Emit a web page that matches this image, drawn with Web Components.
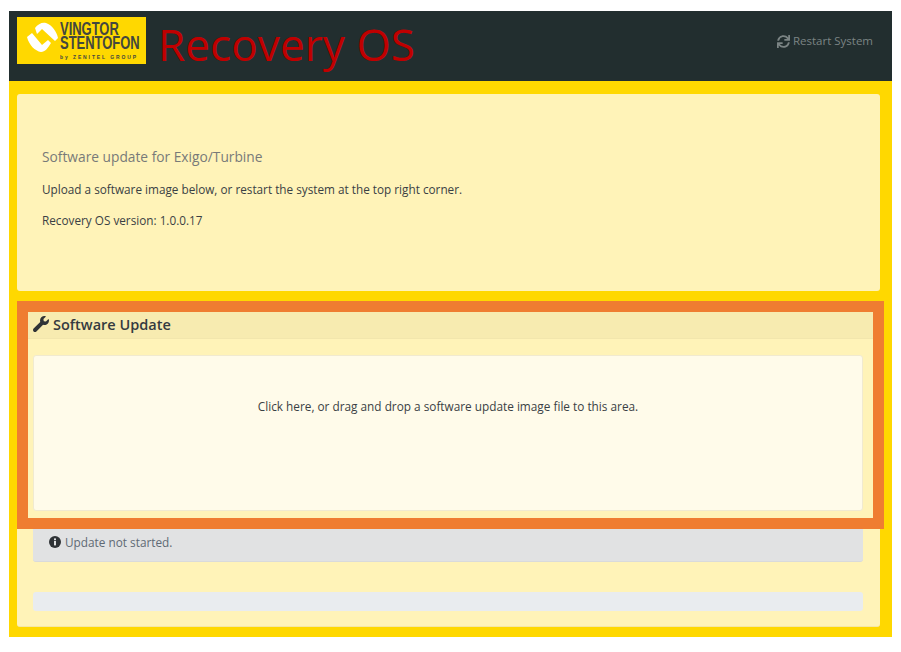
<!DOCTYPE html>
<html lang="en">
<head>
<meta charset="utf-8">
<title>Recovery OS</title>
<style>
    html, body {
        margin: 0;
        background: #fff;
        overflow: hidden;
    }
    body {
        padding: 11px 9px 15px 9px;
        font-family: "Open Sans", "Noto Sans", sans-serif;
        color: #3a3f44;
    }
</style>
</head>
<body>
<recovery-page>
    <recovery-header slot="header"></recovery-header>
    <intro-panel>
        <span slot="title">Software update for Exigo/Turbine</span>
        <span slot="lead">Upload a software image below, or restart the system at the top right corner.</span>
        <span slot="version">Recovery OS version: 1.0.0.17</span>
    </intro-panel>
    <update-card>
        <span slot="title">Software Update</span>
        <drop-zone>Click here, or drag and drop a software update image file to this area.</drop-zone>
        <status-alert>Update not started.</status-alert>
        <progress-bar></progress-bar>
    </update-card>
</recovery-page>

<script>
// each element just owns its own shadow markup
function define(name, html) {
    customElements.define(name, class extends HTMLElement {
        constructor() {
            super();
            this.attachShadow({mode: "open"}).innerHTML = html;
        }
    });
}

define("recovery-page", /* html */ `
<style>
    :host {
        display: block;
        width: 883px;
        height: 626px;
        background: #ffd800;
    }
    main {
        display: flex;
        flex-direction: column;
        gap: 10px;
        padding: 13px 12px 10px 8px;
    }
</style>
<slot name="header"></slot>
<main><slot></slot></main>
`);

define("recovery-header", /* html */ `
<style>
    :host {
        display: flex;
        align-items: flex-start;
        height: 70px;
        padding: 6px 19px 0 8px;
        box-sizing: border-box;
        background: #222e2f;
    }
    .logo {
        display: flex;
        width: 129px;
        height: 47px;
        box-sizing: border-box;
        padding-left: 5px;
        background: #ffd800;
        color: #43473f;
        flex: none;
    }
    .logo svg {
        flex: none;
        margin-right: -2px;
    }
    .words {
        display: flex;
        flex-direction: column;
        padding-top: 5px;
        font-family: "Liberation Sans", sans-serif;
        font-weight: 700;
        font-size: 18px;
        line-height: 14px;
        white-space: nowrap;
    }
    .words b {
        display: block;
        width: 80px;
        transform: scaleX(.72);
        transform-origin: left;
    }
    .words small {
        font-size: 5px;
        line-height: 7px;
        margin-top: 4px;
        letter-spacing: 1.9px;
    }
    h1 {
        margin: -5px 0 0 12px;
        font-size: 44.2px;
        line-height: 64px;
        font-weight: 400;
        color: #c00000;
        white-space: nowrap;
    }
    a {
        margin: 16px 0 0 auto;
        display: flex;
        align-items: center;
        gap: 3px;
        font-size: 11.5px;
        line-height: 16px;
        color: #7b8484;
    }
</style>
<div class="logo">
    <svg width="40" height="40" viewBox="0 0 40 40" fill="#fff">
        <path d="M13 11C16 7 20 5 24 6 30 8 35 15 36 21L33 24 20 12 15 17Z"/>
        <path d="M5 20 10 16 20 28 26 23 29 26C26 31 23 35 19 35 13 34 7 28 5 20Z"/>
    </svg>
    <div class="words">
        <b>VINGTOR</b>
        <b>STENTOFON</b>
        <small>by ZENITEL GROUP</small>
    </div>
</div>
<h1>Recovery OS</h1>
<a>
    <svg width="13" height="13" viewBox="0 0 512 512" fill="currentColor"><path d="M440.65 12.57l4 82.77A247.16 247.16 0 0 0 255.83 8C134.73 8 33.91 94.92 12.29 209.82A12 12 0 0 0 24.09 224h49.05a12 12 0 0 0 11.67-9.26 175.91 175.91 0 0 1 317-56.94l-101.46-4.86a12 12 0 0 0-12.57 12v47.41a12 12 0 0 0 12 12H500a12 12 0 0 0 12-12V12a12 12 0 0 0-12-12h-47.37a12 12 0 0 0-11.98 12.57zM255.83 432a175.61 175.61 0 0 1-146-77.8l101.8 4.87a12 12 0 0 0 12.57-12v-47.4a12 12 0 0 0-12-12H12a12 12 0 0 0-12 12V500a12 12 0 0 0 12 12h47.35a12 12 0 0 0 12-12.6l-4.15-82.57A247.17 247.17 0 0 0 255.83 504c121.11 0 221.93-86.92 243.55-201.82a12 12 0 0 0-11.8-14.18h-49.05a12 12 0 0 0-11.67 9.26A175.86 175.86 0 0 1 255.83 432z"/></svg>
    Restart System
</a>
`);

define("intro-panel", /* html */ `
<style>
    :host {
        display: block;
        height: 197px;
        box-sizing: border-box;
        padding: 53px 25px 0 25px;
        background: #fff3b8;
        border-radius: 3px;
    }
    h2 {
        margin: 0 0 13px;
        font-size: 13.75px;
        line-height: 20px;
        font-weight: 400;
        color: #787a78;
    }
    p {
        margin: 0 0 13px;
        font-size: 11.75px;
        line-height: 18px;
    }
</style>
<h2><slot name="title"></slot></h2>
<p><slot name="lead"></slot></p>
<p><slot name="version"></slot></p>
`);

define("update-card", /* html */ `
<style>
    :host {
        display: block;
        position: relative;
        height: 326px;
        box-sizing: border-box;
        padding: 11px 7px 0 11px;
        background: #fff3b8;
        border-bottom: 1px solid #f5e7a6;
        border-radius: 3px;
    }
    h3 {
        display: flex;
        align-items: center;
        gap: 4px;
        height: 27px;
        margin: 0;
        padding: 0 0 2px 5px;
        font-size: 14.5px;
        font-weight: 600;
        color: #343a40;
        background: #f7ebb0;
        border-bottom: 1px solid #f2e6ad;
        box-sizing: border-box;
    }
    .body {
        display: flex;
        flex-direction: column;
        padding: 16px 10px 0 5px;
    }
    .mark {
        position: absolute;
        left: 0;
        top: 0;
        right: -4px;
        height: 228px;
        box-sizing: border-box;
        border: 11px solid #ef7d31;
        pointer-events: none;
    }
</style>
<h3>
    <svg width="16" height="16" viewBox="0 0 512 512" fill="#2f3336"><path d="M507.73 109.1c-2.24-9.03-13.54-12.09-20.12-5.51l-74.36 74.36-67.88-11.31-11.31-67.88 74.36-74.36c6.62-6.62 3.43-17.9-5.66-20.16-47.38-11.74-99.55.91-136.58 37.93-39.64 39.64-50.55 97.1-34.05 147.2L18.74 402.76c-24.99 24.99-24.99 65.51 0 90.5 24.99 24.99 65.51 24.99 90.5 0l213.21-213.21c50.12 16.71 107.47 5.68 147.37-34.22 37.07-37.07 49.7-89.32 37.91-136.73z"/></svg>
    <slot name="title"></slot>
</h3>
<div class="body"><slot></slot></div>
<div class="mark"></div>
`);

define("drop-zone", /* html */ `
<style>
    :host {
        display: flex;
        align-items: center;
        justify-content: center;
        height: 156px;
        box-sizing: border-box;
        padding-bottom: 54px;
        background: #fffbea;
        border: 1px solid #f1ead0;
        border-radius: 3px;
        font-size: 11.8px;
        color: #3a3f44;
    }
</style>
<slot></slot>
`);

define("status-alert", /* html */ `
<style>
    :host {
        display: flex;
        align-items: center;
        gap: 4px;
        height: 36px;
        margin-top: 15px;
        box-sizing: border-box;
        padding: 0 0 3px 16px;
        background: #e1e2e3;
        border-bottom: 1px solid #d9dadb;
        border-radius: 3px;
        font-size: 11.8px;
        color: #5f6a75;
    }
</style>
<svg width="12" height="12" viewBox="0 0 12 12">
    <circle cx="6" cy="6" r="6" fill="#2f3336"/>
    <rect x="5" y="5" width="2" height="4.4" fill="#e1e2e3"/>
    <rect x="5" y="2.4" width="2" height="1.8" fill="#e1e2e3"/>
</svg>
<slot></slot>
`);

define("progress-bar", /* html */ `
<style>
    :host {
        display: block;
        height: 19px;
        margin-top: 30px;
        background: #e9ecef;
        border-radius: 3px;
    }
</style>
`);
</script>
</body>
</html>
